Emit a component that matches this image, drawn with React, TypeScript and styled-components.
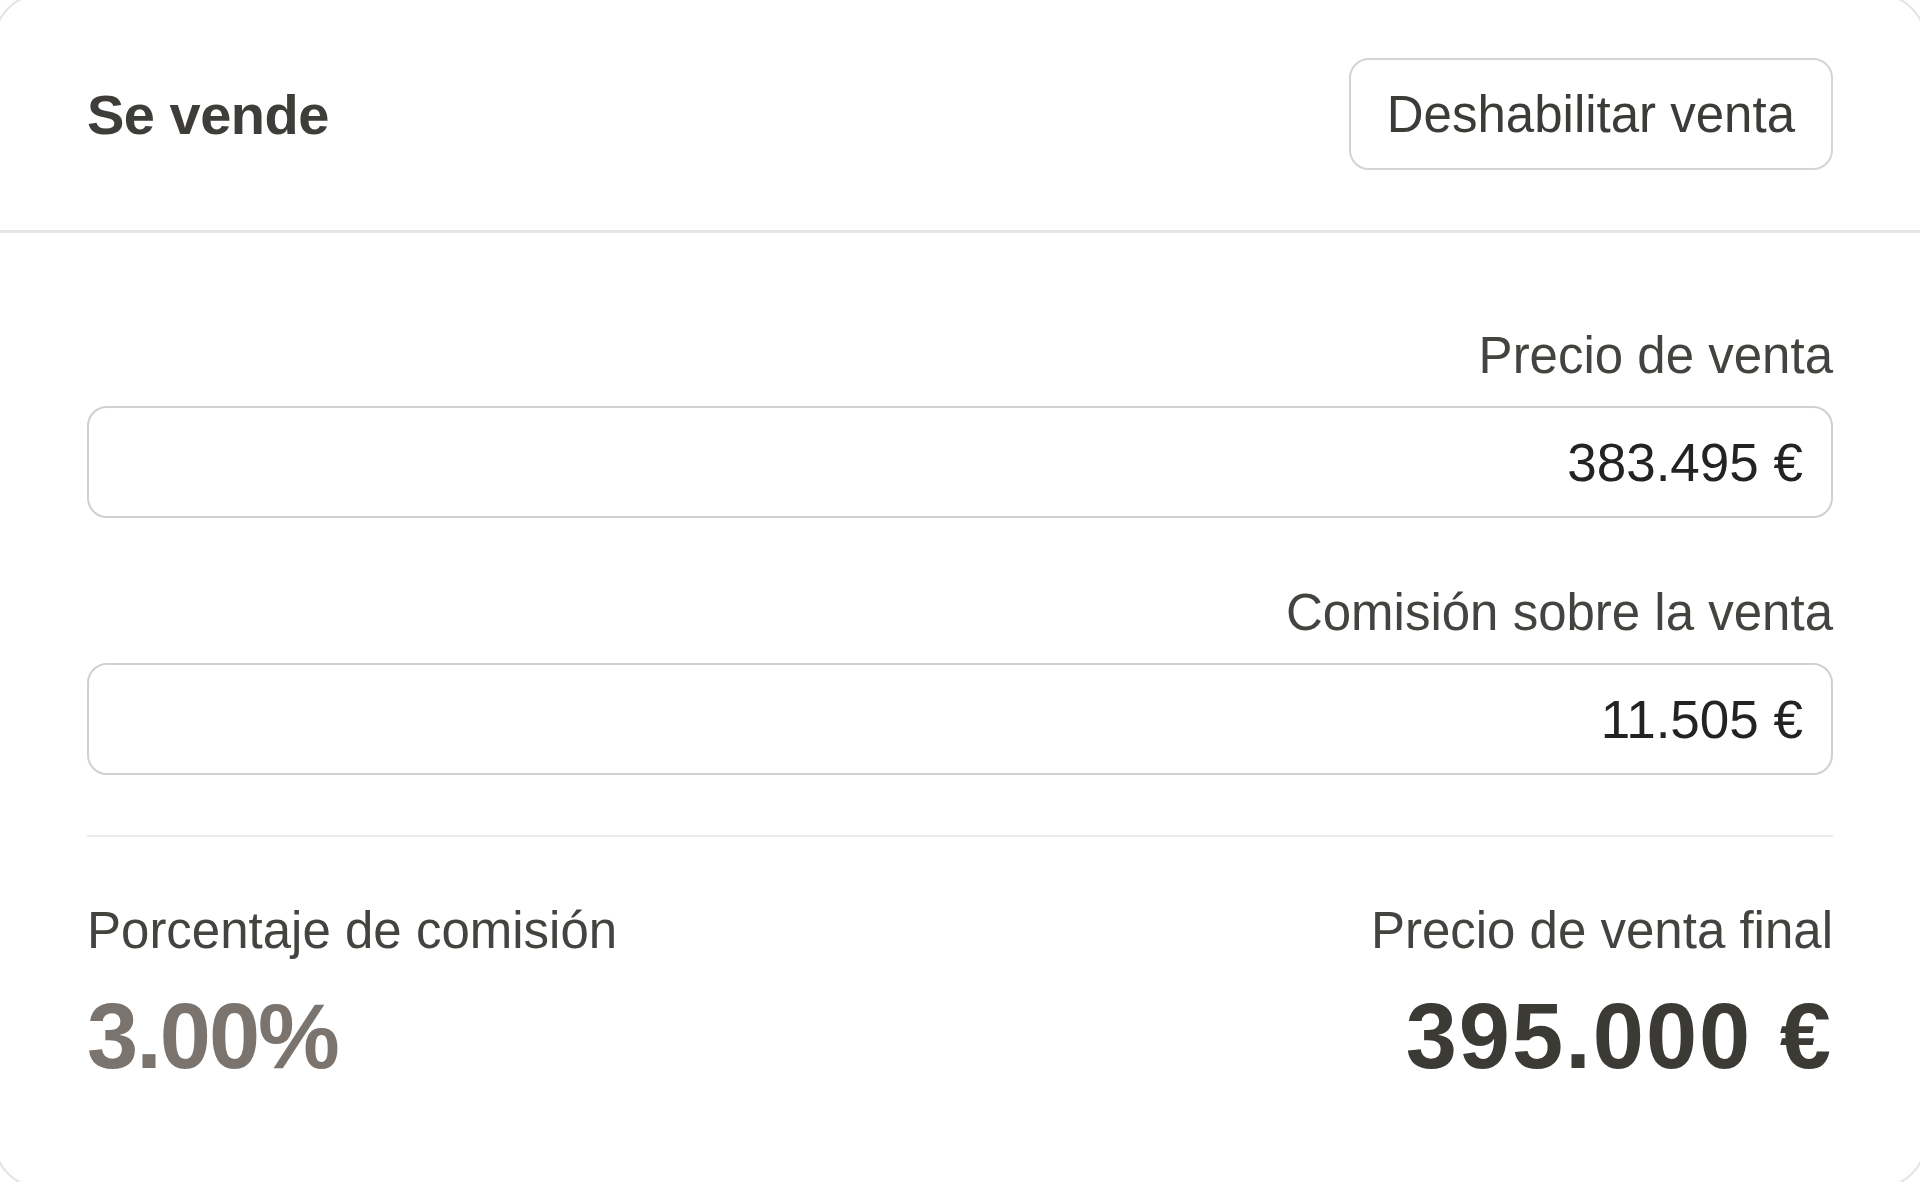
import React, { useState } from "react";
import styled, { createGlobalStyle } from "styled-components";

const GlobalStyle = createGlobalStyle`
  html, body {
    margin: 0;
    padding: 0;
    background: #ffffff;
    overflow: hidden;
  }
  body {
    font-family: "Liberation Sans", Arial, sans-serif;
    color: #43413d;
  }
  * {
    box-sizing: border-box;
  }
`;

const Card = styled.section`
  margin: -6px;
  min-height: calc(100vh + 12px);
  background: #ffffff;
  border: 2px solid #e4e4e4;
  border-radius: 46px;
  display: flex;
  flex-direction: column;
`;

const Header = styled.header`
  display: flex;
  align-items: center;
  justify-content: space-between;
  padding: 62px 91px 60px 91px;
  border-bottom: 3px solid #e6e6e6;
`;

const Title = styled.h2`
  margin: 0;
  font-size: 56px;
  font-weight: 700;
  letter-spacing: -0.5px;
  color: #3f3d39;
`;

const OutlineButton = styled.button`
  height: 112px;
  padding: 0 36px;
  background: #fff;
  border: 2px solid #d4d4d4;
  border-radius: 20px;
  font-family: inherit;
  font-size: 51px;
  color: #3d3b38;
  cursor: pointer;
`;

const Body = styled.div`
  display: flex;
  flex-direction: column;
  padding: 93px 91px 0 91px;
`;

const Field = styled.label`
  display: flex;
  flex-direction: column;
  align-items: stretch;
  gap: 20px;
  & + & {
    margin-top: 65px;
  }
`;

const FieldLabel = styled.span`
  align-self: flex-end;
  font-size: 51px;
  line-height: 60px;
  color: #45433f;
`;

const Input = styled.input`
  height: 112px;
  width: 100%;
  padding: 0 28px;
  border: 2px solid #d0d0d0;
  border-radius: 20px;
  outline: 0;
  background: #fff;
  text-align: right;
  font-family: inherit;
  font-size: 53px;
  color: #232323;
`;

const Divider = styled.hr`
  margin: 60px 0 0 0;
  border: 0;
  height: 2px;
  background: #ebebeb;
`;

const Summary = styled.div`
  display: flex;
  justify-content: space-between;
  padding-top: 64px;
`;

const Stat = styled.div<{ $align: "left" | "right" }>`
  display: flex;
  flex-direction: column;
  align-items: ${(p) => (p.$align === "right" ? "flex-end" : "flex-start")};
  gap: 25px;
`;

const StatLabel = styled.span`
  font-size: 51px;
  line-height: 60px;
  color: #45433f;
`;

const StatValue = styled.span<{ $muted?: boolean }>`
  font-size: 92px;
  line-height: 100px;
  font-weight: 700;
  letter-spacing: ${(p) => (p.$muted ? "-2px" : "2px")};
  color: ${(p) => (p.$muted ? "#7b736d" : "#3c3a35")};
`;

const App: React.FC = () => {
  const [price, setPrice] = useState("383.495 €");
  const [fee, setFee] = useState("11.505 €");

  return (
    <>
      <GlobalStyle />
      <Card>
        <Header>
          <Title>Se vende</Title>
          <OutlineButton>Deshabilitar venta</OutlineButton>
        </Header>
        <Body>
          <Field>
            <FieldLabel>Precio de venta</FieldLabel>
            <Input value={price} onChange={(e) => setPrice(e.target.value)} />
          </Field>
          <Field>
            <FieldLabel>Comisión sobre la venta</FieldLabel>
            <Input value={fee} onChange={(e) => setFee(e.target.value)} />
          </Field>
          <Divider />
          <Summary>
            <Stat $align="left">
              <StatLabel>Porcentaje de comisión</StatLabel>
              <StatValue $muted>3.00%</StatValue>
            </Stat>
            <Stat $align="right">
              <StatLabel>Precio de venta final</StatLabel>
              <StatValue>395.000 €</StatValue>
            </Stat>
          </Summary>
        </Body>
      </Card>
    </>
  );
};

export default App;
